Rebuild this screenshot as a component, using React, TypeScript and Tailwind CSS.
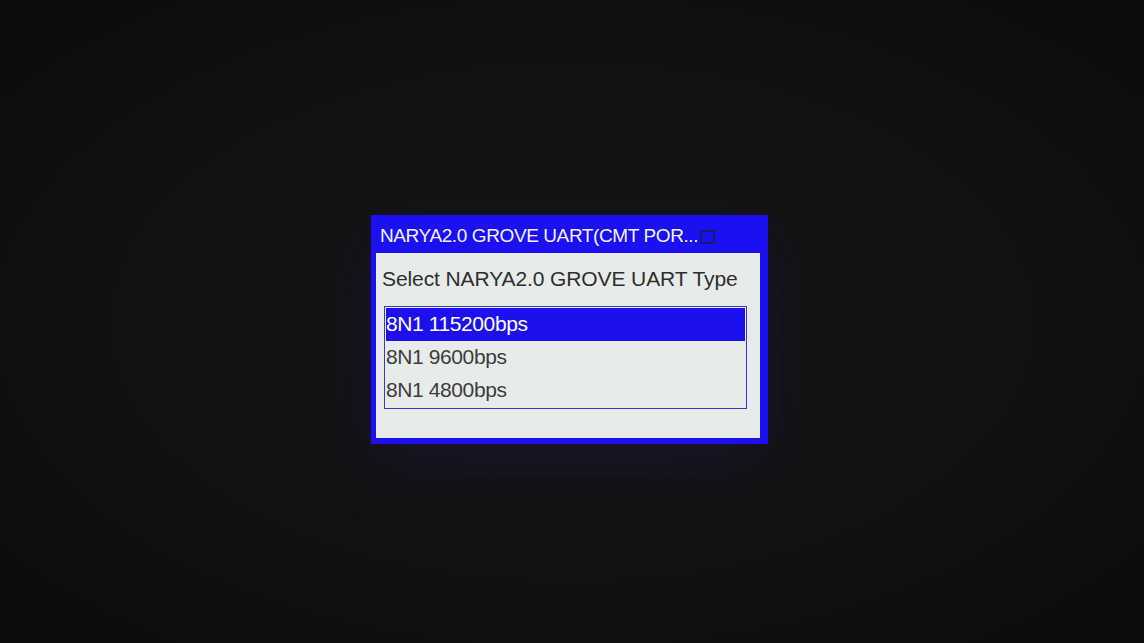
import React from 'react';

const rates = ['8N1 115200bps', '8N1 9600bps', '8N1 4800bps'];

export default function App() {
  const selected = 0;

  return (
    <div
      className="w-[1144px] h-[643px] overflow-hidden pt-[215px] pl-[371px] bg-[radial-gradient(ellipse_at_50%_50%,#161414_0%,#131111_50%,#0c0a0a_100%)]"
      style={{ fontFamily: '"Liberation Sans", Arial, sans-serif' }}
    >
      <div className="w-[397px] h-[229px] flex flex-col bg-[#1a10f0] pl-[5px] pr-[8px] pb-[6px] shadow-[0_20px_60px_rgba(30,30,120,0.25)]">
        {/* title bar */}
        <div className="h-[38px] shrink-0 flex items-center pl-[4px] pt-[2px]">
          <span className="text-[19px] leading-none tracking-[-0.4px] text-[#f2f2ff]">
            NARYA2.0 GROVE UART(CMT POR...
          </span>
          <span className="ml-[2px] mt-[3px] w-[15px] h-[14px] border-2 border-[#1a1a6a]" />
        </div>

        {/* body */}
        <div className="flex-1 bg-[#e7ecea] pl-[6px] pr-[13px] pt-[12px]">
          <p className="text-[21px] leading-[28px] tracking-[-0.1px] text-[#2e2e2e]">
            Select NARYA2.0 GROVE UART Type
          </p>
          <div className="mt-[13px] ml-[2px] h-[103px] border border-[#3a37c8] p-px">
            {rates.map((r, i) => (
              <div
                key={r}
                className={`h-[33px] flex items-center pb-[2px] text-[21px] tracking-[-0.4px] ${
                  i === selected ? 'bg-[#1e10ee] text-white' : 'text-[#3c3c3c]'
                }`}
              >
                {r}
              </div>
            ))}
          </div>
        </div>
      </div>
    </div>
  );
}
